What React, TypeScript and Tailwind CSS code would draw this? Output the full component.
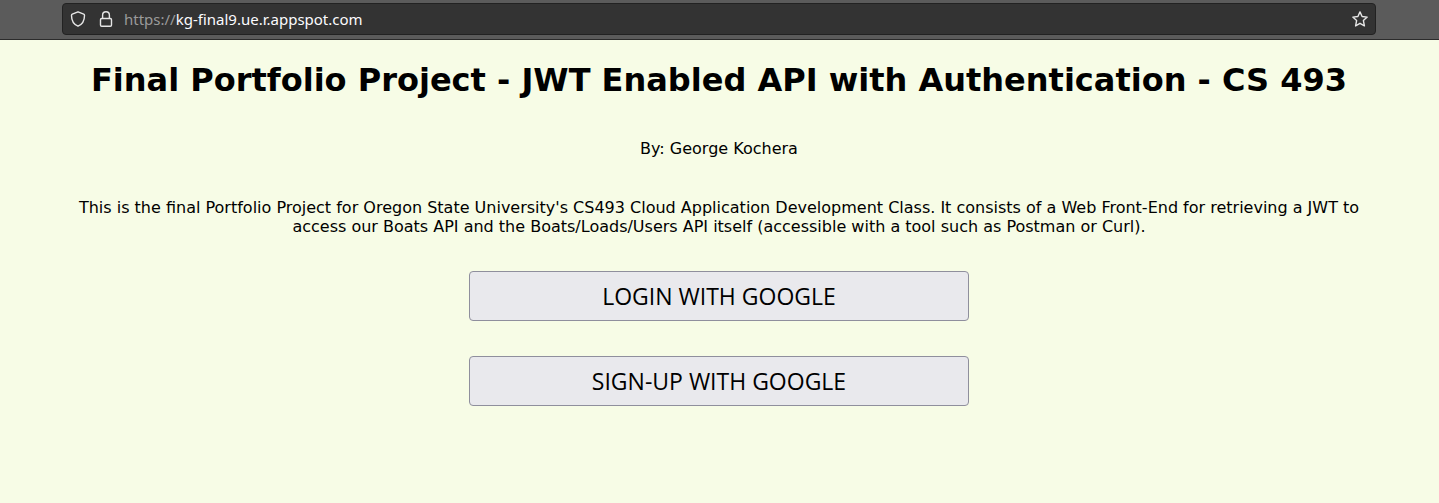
import React from "react";

function ShieldIcon() {
  return (
    <svg className="size-4" viewBox="0 0 16 16" fill="none" stroke="currentColor" strokeWidth="1.4" strokeLinejoin="round" aria-hidden="true">
      <path d="M8 .8L13.700 3.100Q14.500 3.500 14.500 4.400C14.500 9.400 12.400 13.200 8 15.200C3.600 13.200 1.500 9.400 1.500 4.400Q1.500 3.500 2.300 3.100Z" />
    </svg>
  );
}

function LockIcon() {
  return (
    <svg className="size-4" viewBox="0 0 16 16" fill="none" stroke="currentColor" strokeWidth="1.4" aria-hidden="true">
      <rect x="2.500" y="7.500" width="11" height="7.800" rx="1.200" />
      <path d="M4.600 7.500V4.200a3.400 3.400 0 0 1 6.800 0V7.500" />
    </svg>
  );
}

function StarIcon() {
  return (
    <svg className="size-4" viewBox="0 0 16 16" fill="none" stroke="currentColor" strokeWidth="1.4" strokeLinejoin="round" aria-hidden="true">
      <path d="M8 .9l2.100 4.600 5.100.6-3.800 3.500 1 5.300L8 12.300l-4.400 2.600 1-5.300L.8 6.100l5.100-.6Z" />
    </svg>
  );
}

function AddressBar() {
  return (
    <header className="h-10 border-b border-[#2b2b2b] bg-[#5b5b5b] pt-[3px] pr-[63px] pl-[62px]">
      <div className="flex h-8 items-center rounded border border-[#222222] bg-[#333333] px-[7px] text-[#e6e6e6]">
        <ShieldIcon />
        <span className="ml-3"><LockIcon /></span>
        <a href="https://kg-final9.ue.r.appspot.com" className="ml-[10px] flex-1 pt-px font-['Noto_Sans',sans-serif] text-[15px] text-[#fbfbfe]">
          <span className="text-[#9a9a9a]">https://</span>kg-final9.ue.r.appspot.com
        </a>
        <button type="button" aria-label="Bookmark this page"><StarIcon /></button>
      </div>
    </header>
  );
}

function ActionButton({ children }: { children: React.ReactNode }) {
  return (
    <button type="button" className="h-[50px] w-full max-w-[500px] rounded border border-[#8f8f9d] bg-[#e9e9ed] font-['Open_Sans',sans-serif] text-[23px] font-medium">
      {children}
    </button>
  );
}

export default function App() {
  return (
    <div className="min-h-screen bg-[#f7fce6] font-['DejaVu_Sans',sans-serif] text-base text-black">
      <AddressBar />
      <main className="pt-[21px] pr-[73px] pl-[72px] text-center">
        <h1 className="text-[32px] leading-[38px] font-bold">Final Portfolio Project - JWT Enabled API with Authentication - CS 493</h1>
        <p className="mt-10 leading-[19px]">By: George Kochera</p>
        <p className="mt-10 leading-[19px]">
          This is the final Portfolio Project for Oregon State University's CS493 Cloud Application Development Class. It consists of a Web Front-End for retrieving a JWT to access our Boats API and the Boats/Loads/Users API itself (accessible with a tool such as Postman or Curl).
        </p>
        <div className="mt-[35px] flex flex-col items-center gap-[35px]">
          <ActionButton>LOGIN WITH GOOGLE</ActionButton>
          <ActionButton>SIGN-UP WITH GOOGLE</ActionButton>
        </div>
      </main>
    </div>
  );
}
